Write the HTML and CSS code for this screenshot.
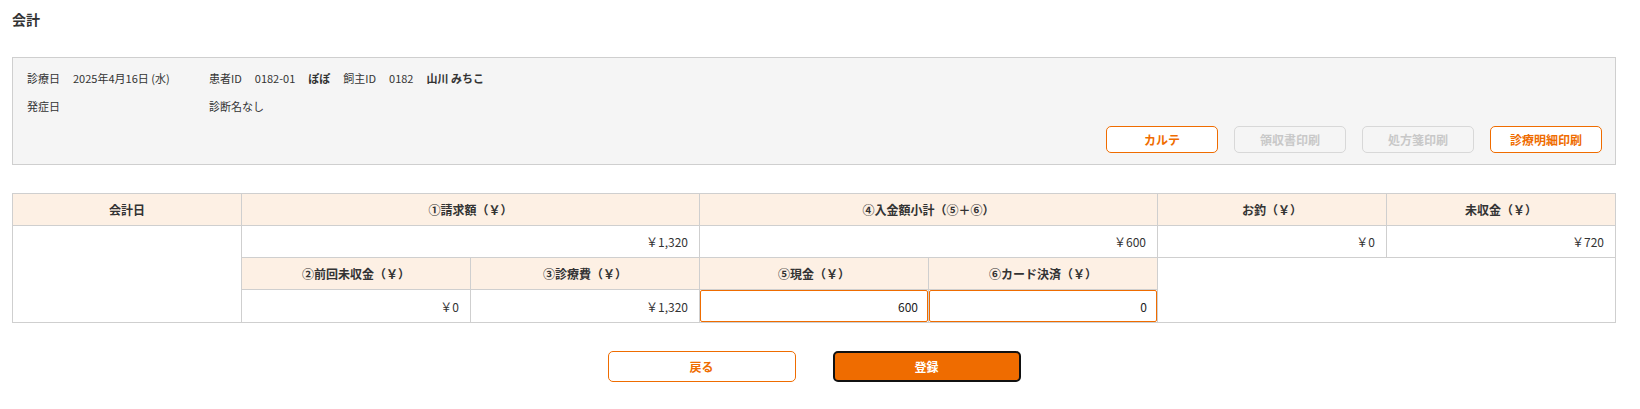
FILE: index.html
```html
<!DOCTYPE html>
<html lang="ja">
<head>
    <meta charset="UTF-8">
    <title>会計</title>
    <link rel="stylesheet" href="styles.css">
</head>
<body>
<div class="page">
    <h1 class="title">会計</h1>

    <div class="info-box">
        <div class="info-row">
            <div class="info-col">
                <span class="label">診療日</span>
                <span>2025年4月16日 (水)</span>
            </div>
            <div class="info-col">
                <span class="label">患者ID</span>
                <span>0182-01</span>
                <span class="strong">ぽぽ</span>
                <span class="label">飼主ID</span>
                <span>0182</span>
                <span class="strong">山川 みちこ</span>
            </div>
        </div>
        <div class="info-row">
            <div class="info-col">
                <span class="label">発症日</span>
            </div>
            <div class="info-col">
                <span>診断名なし</span>
            </div>
        </div>
        <div class="info-actions">
            <button type="button" class="btn-outline">カルテ</button>
            <button type="button" class="btn-outline" disabled>領収書印刷</button>
            <button type="button" class="btn-outline" disabled>処方箋印刷</button>
            <button type="button" class="btn-outline">診療明細印刷</button>
        </div>
    </div>

    <table class="account-table">
        <colgroup>
            <col><col><col><col><col><col><col>
        </colgroup>
        <tr>
            <th>会計日</th>
            <th colspan="2">①請求額（￥）</th>
            <th colspan="2">④入金額小計（⑤＋⑥）</th>
            <th>お釣（￥）</th>
            <th>未収金（￥）</th>
        </tr>
        <tr>
            <td rowspan="3"></td>
            <td colspan="2" class="num">￥1,320</td>
            <td colspan="2" class="num">￥600</td>
            <td class="num">￥0</td>
            <td class="num">￥720</td>
        </tr>
        <tr>
            <th>②前回未収金（￥）</th>
            <th>③診療費（￥）</th>
            <th>⑤現金（￥）</th>
            <th>⑥カード決済（￥）</th>
            <td colspan="2" rowspan="2"></td>
        </tr>
        <tr>
            <td class="num">￥0</td>
            <td class="num">￥1,320</td>
            <td class="input-cell"><input type="text" value="600"></td>
            <td class="input-cell"><input type="text" value="0"></td>
        </tr>
    </table>

    <div class="form-actions">
        <button type="button" class="btn-back">戻る</button>
        <button type="button" class="btn-submit">登録</button>
    </div>
</div>
</body>
</html>
```

FILE: styles.css
```css
body {
    margin: 0;
    font-family: "Noto Sans CJK JP", "Noto Sans", sans-serif;
    color: #333;
    background-color: #fff;
}

.page {
    padding: 9px 24px 0 12px;
}

.title {
    margin: 0;
    font-size: 14px;
    line-height: 20px;
    font-weight: bold;
}

.info-box {
    margin-top: 28px;
    padding: 12px 13px 11px 14px;
    background-color: #f5f5f5;
    border: 1px solid #cfcfcf;
    font-size: 11px;
    line-height: 16px;
}

.info-row {
    display: flex;
    margin-bottom: 12px;
}

.info-col {
    display: flex;
    gap: 13px;
}

.info-col:first-child {
    width: 182px;
}

.strong {
    font-weight: bold;
}

.info-actions {
    display: flex;
    justify-content: flex-end;
    gap: 16px;
}

button {
    font-family: inherit;
    font-weight: bold;
    cursor: pointer;
}

.btn-outline {
    width: 112px;
    height: 27px;
    font-size: 12px;
    color: #ef6c00;
    background-color: #fff;
    border: 1px solid #ef6c00;
    border-radius: 5px;
}

.btn-outline:disabled {
    color: #c8c8c8;
    border-color: #d8d8d8;
    background-color: #f5f5f5;
    cursor: default;
}

.account-table {
    width: 100%;
    margin-top: 28px;
    border-collapse: collapse;
    table-layout: fixed;
    font-size: 12px;
}

.account-table th,
.account-table td {
    height: 31px;
    padding: 0 11px;
    border: 1px solid #cfcfcf;
}

.account-table th {
    background-color: #fdf0e4;
    font-weight: bold;
}

.account-table .num {
    text-align: right;
}

.account-table .input-cell {
    padding: 0;
}

.input-cell input {
    display: block;
    box-sizing: border-box;
    width: 100%;
    height: 32px;
    padding: 0 9px;
    border: 1px solid #ef6c00;
    border-radius: 2px;
    text-align: right;
    font-family: inherit;
    font-size: 12px;
    color: #222;
    background: #fff;
}

.form-actions {
    display: flex;
    justify-content: center;
    gap: 37px;
    margin-top: 28px;
}

.btn-back,
.btn-submit {
    width: 188px;
    height: 31px;
    font-size: 12px;
    border-radius: 5px;
}

.btn-back {
    color: #ef6c00;
    background-color: #fff;
    border: 1px solid #ef6c00;
}

.btn-submit {
    color: #fff;
    background-color: #ef6c00;
    border: 2px solid #111;
}
```
